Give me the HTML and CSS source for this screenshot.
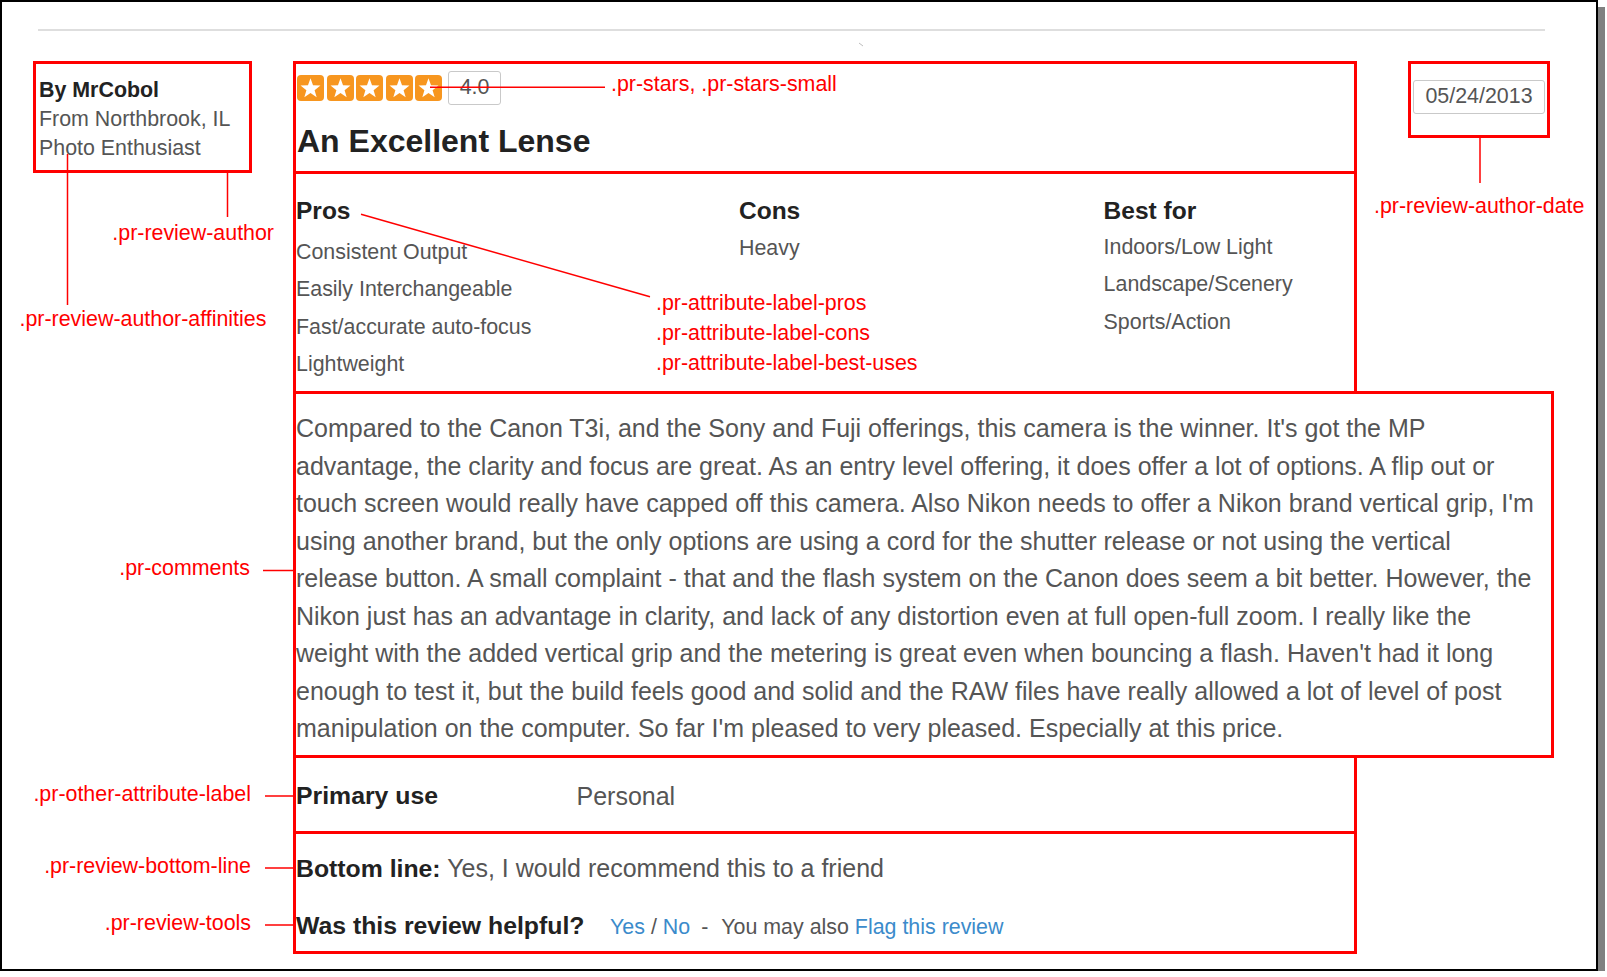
FILE: index.html
```html
<!DOCTYPE html>
<html>
<head>
<meta charset="utf-8">
<title>Review annotations</title>
<link rel="stylesheet" href="styles.css">
</head>
<body>
<div class="frame">
  <div class="rule"></div>
  <div class="review">
    <div class="author">
      <div class="author-name">By MrCobol</div>
      <div class="author-meta">From Northbrook, IL</div>
      <div class="author-meta">Photo Enthusiast</div>
    </div>
    <div class="main">
      <div class="sec hdr">
        <div class="rating">
          <div class="stars">
            <svg class="star" viewBox="0 0 27 26"><rect width="27" height="26" rx="4" fill="#f7961f"/><polygon fill="#fff" points="13.5,3.3 16.03,10.32 23.49,10.56 17.59,15.13 19.67,22.29 13.5,18.1 7.33,22.29 9.41,15.13 3.51,10.56 10.97,10.32"/></svg>
            <svg class="star" viewBox="0 0 27 26"><rect width="27" height="26" rx="4" fill="#f7961f"/><polygon fill="#fff" points="13.5,3.3 16.03,10.32 23.49,10.56 17.59,15.13 19.67,22.29 13.5,18.1 7.33,22.29 9.41,15.13 3.51,10.56 10.97,10.32"/></svg>
            <svg class="star" viewBox="0 0 27 26"><rect width="27" height="26" rx="4" fill="#f7961f"/><polygon fill="#fff" points="13.5,3.3 16.03,10.32 23.49,10.56 17.59,15.13 19.67,22.29 13.5,18.1 7.33,22.29 9.41,15.13 3.51,10.56 10.97,10.32"/></svg>
            <svg class="star" viewBox="0 0 27 26"><rect width="27" height="26" rx="4" fill="#f7961f"/><polygon fill="#fff" points="13.5,3.3 16.03,10.32 23.49,10.56 17.59,15.13 19.67,22.29 13.5,18.1 7.33,22.29 9.41,15.13 3.51,10.56 10.97,10.32"/></svg>
            <svg class="star" viewBox="0 0 27 26"><rect width="27" height="26" rx="4" fill="#f7961f"/><polygon fill="#fff" points="13.5,3.3 16.03,10.32 23.49,10.56 17.59,15.13 19.67,22.29 13.5,18.1 7.33,22.29 9.41,15.13 3.51,10.56 10.97,10.32"/></svg>
          </div>
          <span class="score">4.0</span>
        </div>
        <h1 class="title">An Excellent Lense</h1>
      </div>
      <div class="sec attrs">
        <div class="attr pros">
          <h3>Pros</h3>
          <ul>
            <li>Consistent Output</li>
            <li>Easily Interchangeable</li>
            <li>Fast/accurate auto-focus</li>
            <li>Lightweight</li>
          </ul>
        </div>
        <div class="attr cons">
          <h3>Cons</h3>
          <ul>
            <li>Heavy</li>
          </ul>
        </div>
        <div class="attr best">
          <h3>Best for</h3>
          <ul>
            <li>Indoors/Low Light</li>
            <li>Landscape/Scenery</li>
            <li>Sports/Action</li>
          </ul>
        </div>
      </div>
      <div class="sec comments">
        <p>Compared to the Canon T3i, and the Sony and Fuji offerings, this camera is the winner. It's got the MP advantage, the clarity and focus are great. As an entry level offering, it does offer a lot of options. A flip out or touch screen would really have capped off this camera. Also Nikon needs to offer a Nikon brand vertical grip, I'm using another brand, but the only options are using a cord for the shutter release or not using the vertical release button. A small complaint - that and the flash system on the Canon does seem a bit better. However, the Nikon just has an advantage in clarity, and lack of any distortion even at full open-full zoom. I really like the weight with the added vertical grip and the metering is great even when bouncing a flash. Haven't had it long enough to test it, but the build feels good and solid and the RAW files have really allowed a lot of level of post manipulation on the computer. So far I'm pleased to very pleased. Especially at this price.</p>
      </div>
      <div class="sec other">
        <span class="other-label">Primary use</span>
        <span class="other-value">Personal</span>
      </div>
      <div class="sec bottom">
        <div class="bottom-line"><b>Bottom line:</b> Yes, I would recommend this to a friend</div>
        <div class="tools"><b>Was this review helpful?</b><span class="tool-links"><a href="#">Yes</a> / <a href="#">No</a><span class="dash">-</span>You may also <a href="#">Flag this review</a></span></div>
      </div>
    </div>
    <div class="date-col">
      <div class="date-box">05/24/2013</div>
    </div>
  </div>

  <div class="overlay">
    <svg class="connectors" width="1598" height="971" viewBox="0 0 1598 971">
      <g stroke="#ff0000" stroke-width="1.5" fill="none">
        <path d="M430 87.3 H605"/>
        <path d="M227.5 173 V217"/>
        <path d="M67.5 154 V305"/>
        <path d="M1480 138 V183"/>
        <path d="M361 214.3 L650 296.7"/>
        <path d="M263 570.5 H293"/>
        <path d="M265 796 H293"/>
        <path d="M265 868 H293"/>
        <path d="M265 925 H293"/>
      </g>
      <path d="M859 43 L863 46" stroke="#bdbdbd" stroke-width="1"/>
    </svg>
    <div class="note note-stars">.pr-stars, .pr-stars-small</div>
    <div class="note note-author">.pr-review-author</div>
    <div class="note note-affinities">.pr-review-author-affinities</div>
    <div class="note note-date">.pr-review-author-date</div>
    <div class="note note-pros">.pr-attribute-label-pros</div>
    <div class="note note-cons">.pr-attribute-label-cons</div>
    <div class="note note-best">.pr-attribute-label-best-uses</div>
    <div class="note note-comments">.pr-comments</div>
    <div class="note note-other">.pr-other-attribute-label</div>
    <div class="note note-bottom">.pr-review-bottom-line</div>
    <div class="note note-tools">.pr-review-tools</div>
  </div>
</div>
</body>
</html>
```

FILE: styles.css
```css
html, body {
  margin: 0;
  padding: 0;
  background: #ffffff;
}

body {
  font-family: "Liberation Sans", Arial, Helvetica, sans-serif;
  color: #555555;
}

.frame {
  position: relative;
  width: 1598px;
  height: 971px;
  box-sizing: border-box;
  border: 2px solid #000000;
  box-shadow: 7px 7px 0 #808080;
  background: #ffffff;
}

.rule {
  margin: 27px 0 0 36px;
  width: 1507px;
  height: 0;
  border-top: 2px solid #dedede;
}

.review {
  display: flex;
  align-items: flex-start;
  margin-top: 30px;
  padding-left: 31px;
}

/* author */
.author {
  flex: none;
  width: 219px;
  height: 112px;
  box-sizing: border-box;
  border: 3px solid #ff0000;
  padding: 12px 0 0 3px;
  font-size: 21.4px;
  line-height: 29px;
}

.author-name {
  font-weight: bold;
  color: #222222;
}

/* main column */
.main {
  flex: none;
  width: 1064px;
  margin-left: 41px;
}

.sec {
  border: 3px solid #ff0000;
  box-sizing: border-box;
}

.sec + .sec {
  margin-top: -3px;
}

.hdr {
  height: 113px;
  padding: 7px 0 0 1px;
}

.rating {
  display: flex;
  align-items: center;
  height: 34px;
}

.stars {
  display: flex;
  gap: 2.5px;
}

.star {
  display: block;
  width: 27px;
  height: 26px;
}

.score {
  margin-left: 6px;
  width: 53px;
  height: 34px;
  box-sizing: border-box;
  border: 1.5px solid #c9c9c9;
  border-radius: 3px;
  font-size: 21.4px;
  line-height: 31px;
  text-align: center;
  color: #555555;
}

.title {
  margin: 16px 0 0;
  font-size: 32px;
  line-height: 40px;
  font-weight: bold;
  color: #222222;
}

/* attributes */
.attrs {
  height: 223px;
  display: grid;
  grid-template-columns: 443px 364.6px 1fr;
  padding-top: 22px;
}

.attr h3 {
  margin: 0;
  font-size: 24.5px;
  line-height: 30px;
  font-weight: bold;
  color: #222222;
}

.attr ul {
  list-style: none;
  margin: 0;
  padding: 0;
  font-size: 21.4px;
  line-height: 37.5px;
}

.pros ul { margin-top: 7.8px; }
.cons ul { margin-top: 3.8px; }
.best ul { margin-top: 2.8px; }

/* comments */
.comments {
  width: 1261px;
  height: 367px;
  padding: 16px 15px 0 0;
  font-size: 25px;
  line-height: 37.5px;
}

.comments p {
  margin: 0;
}

/* other attributes */
.other {
  height: 79px;
  padding-top: 23px;
  display: grid;
  grid-template-columns: 280.5px 1fr;
  font-size: 25px;
  line-height: 30px;
}

.other-label {
  font-weight: bold;
  font-size: 24.8px;
  color: #222222;
}

/* bottom line + tools */
.bottom {
  height: 123px;
  padding-top: 19px;
  font-size: 25px;
  line-height: 30px;
}

.bottom b {
  font-size: 24.8px;
  color: #222222;
}

.tools {
  margin-top: 25.5px;
}

.tool-links {
  margin-left: 25.6px;
  font-size: 21.4px;
}

.tool-links a {
  color: #3b8bcb;
  text-decoration: none;
}

.dash {
  margin: 0 13px 0 11px;
}

/* date */
.date-col {
  flex: none;
  margin-left: 51px;
  width: 142px;
  height: 77px;
  box-sizing: border-box;
  border: 3px solid #ff0000;
  padding: 16px 0 0 2px;
}

.date-box {
  width: 132px;
  height: 34px;
  box-sizing: border-box;
  border: 1.5px solid #c9c9c9;
  border-radius: 3px;
  font-size: 21.4px;
  line-height: 31px;
  text-align: center;
  color: #555555;
}

/* annotation overlay */
.overlay {
  position: absolute;
  left: -2px;
  top: -2px;
  width: 1598px;
  height: 971px;
  pointer-events: none;
}

.connectors {
  position: absolute;
  left: 0;
  top: 0;
}

.note {
  position: absolute;
  font-size: 21.4px;
  line-height: 24px;
  color: #ff0000;
  white-space: nowrap;
}

.note-stars { left: 611px; top: 72px; }
.note-author { right: 1324px; top: 220.5px; }
.note-affinities { left: 19.5px; top: 307px; }
.note-date { left: 1374px; top: 194px; }
.note-pros { left: 656px; top: 290.5px; }
.note-cons { left: 656px; top: 320.5px; }
.note-best { left: 656px; top: 350.5px; }
.note-comments { right: 1348px; top: 555.5px; }
.note-other { right: 1347px; top: 781.5px; }
.note-bottom { right: 1347px; top: 854px; }
.note-tools { right: 1347px; top: 910.5px; }
```
